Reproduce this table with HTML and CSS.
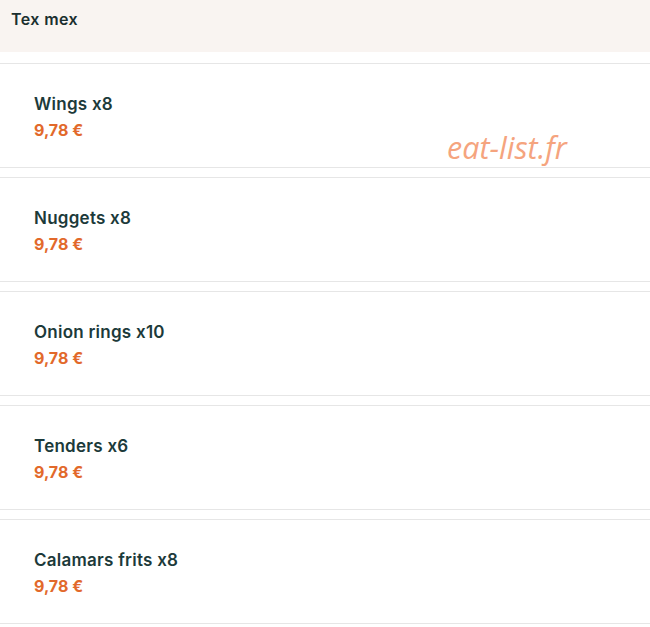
FILE: index.html
```html
<!DOCTYPE html>
<html lang="fr">
<head>
<meta charset="utf-8">
<title>Tex mex</title>
<link rel="stylesheet" href="styles.css">
</head>
<body>
<div class="page">
  <header class="category">
    <h2 class="category-title">Tex mex</h2>
  </header>
  <ul class="items">
    <li class="item"><div class="item-name">Wings x8</div><div class="item-price">9,78 €</div></li>
    <li class="item"><div class="item-name">Nuggets x8</div><div class="item-price">9,78 €</div></li>
    <li class="item"><div class="item-name">Onion rings x10</div><div class="item-price">9,78 €</div></li>
    <li class="item"><div class="item-name">Tenders x6</div><div class="item-price">9,78 €</div></li>
    <li class="item"><div class="item-name">Calamars frits x8</div><div class="item-price">9,78 €</div></li>
  </ul>
  <div class="watermark">eat-list.fr</div>
</div>
</body>
</html>
```
FILE: styles.css
```css
* { box-sizing: border-box; }
html, body { margin: 0; padding: 0; background: #fff; }
body { font-family: "Inter", "Noto Sans", sans-serif; }
.page { position: relative; width: 650px; height: 627px; overflow: hidden; }
.category {
  height: 52px;
  background: #f9f4f1;
  padding: 10px 11px 0;
}
.category-title {
  margin: 0;
  font-size: 16px;
  font-weight: 600;
  letter-spacing: 0.4px;
  color: #1b2f2f;
  line-height: 19px;
}
.items {
  list-style: none;
  margin: 11px 0 0;
  padding: 0;
  display: flex;
  flex-direction: column;
  gap: 9px;
}
.item {
  height: 105px;
  border-top: 1px solid #e6e6e6;
  border-bottom: 1px solid #e6e6e6;
  padding: 30px 34px 0;
  display: flex;
  flex-direction: column;
  gap: 6px;
}
.item-name {
  font-size: 17px;
  font-weight: 600;
  letter-spacing: 0.25px;
  color: #1c3a3a;
  line-height: 20px;
}
.item-price {
  font-size: 16px;
  font-weight: 700;
  color: #e2692b;
  line-height: 20px;
}
.watermark {
  position: absolute;
  left: 447px;
  top: 127px;
  font-family: "Open Sans", sans-serif;
  font-style: italic;
  font-size: 30.5px;
  color: #f5a47e;
  line-height: 40px;
}
```
